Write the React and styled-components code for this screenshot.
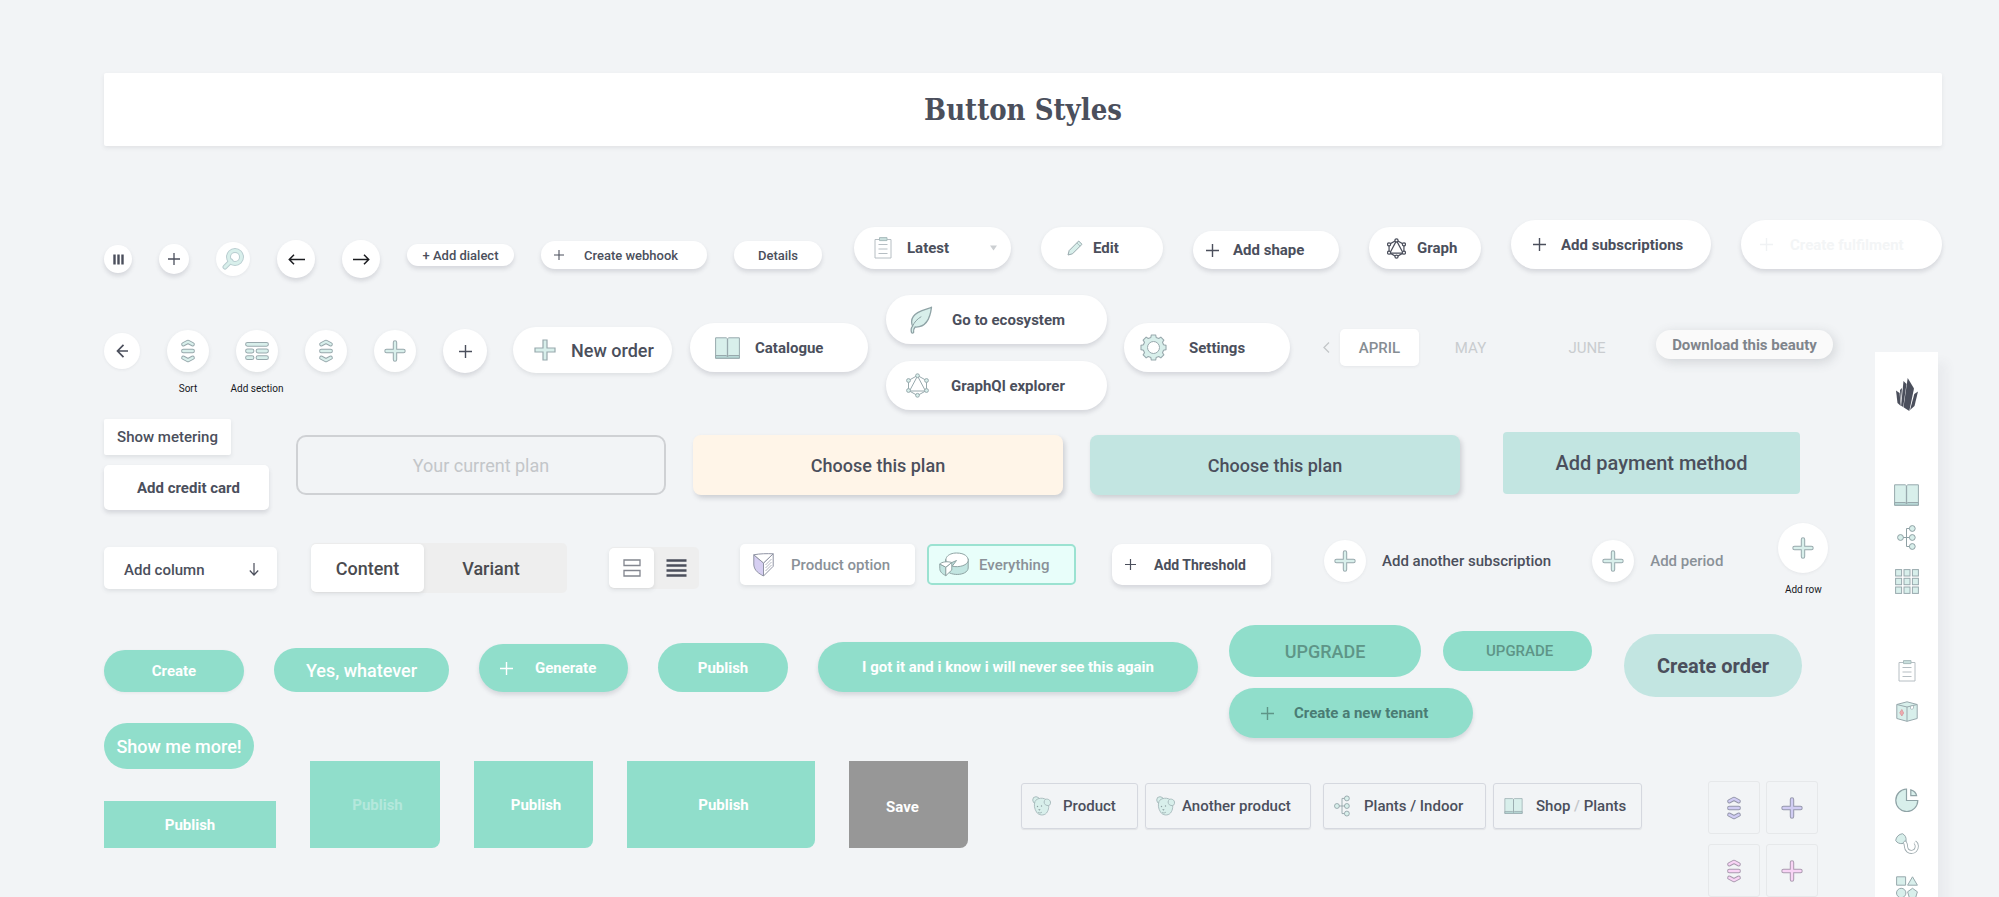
import React, {useState} from 'react';
import styled, {createGlobalStyle, css} from 'styled-components';

const ink = '#4b4f5c';
const line = '#98a9ad';
const mint = '#d8efeb';
const green = '#90decb';
const teal = '#c2e5e1';

const GlobalStyle = createGlobalStyle`
	* {
		box-sizing: border-box;
	}

	html {
		scrollbar-width: none;
	}

	body {
		margin: 0;
		background: #f2f4f6;
		color: ${ink};
		font-family: Roboto, "Liberation Sans", sans-serif;
	}

	button, select {
		font-family: inherit;
		color: inherit;
		border: none;
		padding: 0;
		cursor: pointer;
	}
`;

const Page = styled.main`
	min-height: 100vh;
	padding: 73px 57px 0 104px;
`;

const Banner = styled.header`
	display: flex;
	align-items: center;
	justify-content: center;
	height: 73px;
	background: white;
	border-radius: 2px;
	box-shadow: 0 2px 4px rgba(75, 79, 92, 0.1);
`;

const Title = styled.h1`
	margin: 0;
	font-family: "Roboto Slab", "DejaVu Serif Condensed", "DejaVu Serif", serif;
	font-size: 29px;
	line-height: 36px;
	font-weight: 700;
`;

const TopRow = styled.section`
	display: flex;
	justify-content: space-between;
	align-items: flex-start;
	column-gap: 20px;
	height: 75px;
	margin-top: 74px;
`;

const Board = styled.div`
	display: flex;
	margin-right: 4px;
`;

const Samples = styled.div`
	flex: 1;
	min-width: 0;
`;

const Row = styled.section`
	display: flex;
	align-items: flex-start;
	margin-top: ${p => p.$mt || 0}px;
`;

const Cluster = styled.div`
	display: flex;
	flex-shrink: 0;
	align-items: ${p => p.$align || 'center'};
	gap: ${p => p.$gap || 0}px;
	padding-top: ${p => p.$top || 0}px;
	margin-left: ${p => p.$left || 0}px;
`;

const Stack = styled(Cluster)`
	flex-direction: column;
	align-items: flex-start;
`;

const shadows = {
	none: 'none',
	faint: '0 1px 3px rgba(75, 79, 92, 0.08)',
	soft: '0 2px 4px rgba(75, 79, 92, 0.12)',
	normal: '0 3px 4px rgba(75, 79, 92, 0.17)',
	side: '2px 3px 5px rgba(75, 79, 92, 0.22)',
	wide: '2px 3px 12px rgba(75, 79, 92, 0.2)'
};

const Round = styled.button`
	display: flex;
	flex-shrink: 0;
	align-items: center;
	justify-content: center;
	width: ${p => p.$size || 42}px;
	height: ${p => p.$size || 42}px;
	border-radius: 50%;
	background: white;
	box-shadow: ${p => shadows[p.$shadow || 'soft']};
`;

const Labeled = styled.label`
	display: flex;
	flex-direction: column;
	align-items: center;
	width: ${p => p.$size || 42}px;
`;

const Caption = styled.span`
	margin: 11px 0 -23px;
	font-size: 10px;
	line-height: 12px;
	white-space: nowrap;
	color: #16181d;
`;

const buttonBase = css`
	display: flex;
	flex-shrink: 0;
	align-items: center;
	justify-content: ${p => (p.$pad ? 'flex-start' : 'center')};
	gap: ${p => p.$gap || 0}px;
	width: ${p => p.$w}px;
	height: ${p => p.$h}px;
	padding-left: ${p => p.$pad || 0}px;
	font-size: ${p => p.$fs || 15}px;
	font-weight: ${p => p.$weight || 500};
	white-space: nowrap;
`;

const Pill = styled.button`
	${buttonBase}
	border-radius: 32px;
	background: white;
	font-weight: ${p => p.$weight || 700};
	box-shadow: ${p => shadows[p.$shadow || 'normal']};
`;

const GreenPill = styled(Pill)`
	background: ${green};
	color: ${p => p.$color || 'white'};
`;

const OrderPill = styled(Pill)`
	background: ${teal};
`;

const DownloadPill = styled(Pill)`
	background: #fafafa;
	color: #80858c;
`;

const FadedPill = styled(Pill)`
	color: #f3f5f6;
`;

const SelectPill = styled.label`
	${buttonBase}
	border-radius: 32px;
	background: white;
	box-shadow: ${shadows.normal};
`;

const Select = styled.select`
	appearance: none;
	width: 68px;
	background: transparent;
	font-size: 15px;
	font-weight: 700;
`;

const Card = styled.button`
	${buttonBase}
	border-radius: ${p => p.$r || 5}px;
	background: ${p => p.$bg || 'white'};
	box-shadow: ${p => shadows[p.$shadow || 'soft']};
`;

const OutlineCard = styled(Card)`
	border: 2px solid #cfd1d4;
	background: transparent;
	color: #c3c6c9;
`;

const OptionCard = styled(Card)`
	color: #8a9198;
`;

const ActiveOption = styled(OptionCard)`
	border: 2px solid #9be2d1;
	background: #e8fefa;
`;

const ColumnCard = styled(Card)`
	justify-content: space-between;
	padding: 3px 18px 0 20px;
`;

const Tab = styled.button`
	width: ${p => p.$w}px;
	height: 37px;
	border-radius: 5px;
	font-size: 15px;
	color: ${p => (p.$on ? '#868d93' : '#c9cccf')};
	font-weight: ${p => (p.$on ? 500 : 400)};
	background: ${p => (p.$on ? 'white' : 'transparent')};
	box-shadow: ${p => (p.$on ? shadows.faint : 'none')};
`;

const Ghost = styled.button`
	display: flex;
	align-items: center;
	gap: 16px;
	background: transparent;
	font-size: 15px;
	font-weight: 500;
	color: ${p => p.$color || ink};
`;

const Segment = styled.div`
	display: flex;
	align-items: center;
	width: ${p => p.$w}px;
	height: ${p => p.$h}px;
	padding-right: ${p => p.$end || 0}px;
	border-radius: 5px;
	background: #eeeeee;
`;

const SegmentButton = styled.button`
	display: flex;
	align-items: center;
	justify-content: center;
	flex: ${p => p.$grow || 1};
	height: calc(100% - 2px);
	border-radius: 5px;
	font-size: 18px;
	font-weight: 500;
	color: #4a4b4f;
	background: ${p => (p.$on ? 'white' : 'transparent')};
	box-shadow: ${p => (p.$on ? shadows.soft : 'none')};
`;

const Block = styled.button`
	width: ${p => p.$w}px;
	height: ${p => p.$h || 87}px;
	padding: ${p => p.$pad || 0};
	border-radius: 0 0 ${p => (p.$h ? 0 : 8)}px 0;
	background: ${p => p.$bg || green};
	color: ${p => p.$color || 'white'};
	font-size: 15px;
	font-weight: 700;
`;

const Crumb = styled.button`
	${buttonBase}
	height: 46px;
	border: 1px solid #d5d8df;
	border-radius: 3px;
	background: transparent;
	box-shadow: 0 1px 1px rgba(75, 79, 92, 0.1);
`;

const Slash = styled.span`
	color: #c3c6c9;
`;

const TileGrid = styled.div`
	display: grid;
	grid-template-columns: 52px 52px;
	gap: 10px 6px;
	padding-top: 58px;
	margin-left: 66px;
`;

const Tile = styled.button`
	display: flex;
	align-items: center;
	justify-content: center;
	height: 53px;
	border: 1px solid #e6e8ea;
	border-radius: 3px;
	background: transparent;
`;

const Sidebar = styled.nav`
	flex-shrink: 0;
	width: 63px;
	margin-top: 57px;
	padding-top: 26px;
	background: white;
	box-shadow: 9px 10px 10px rgba(75, 79, 92, 0.05);
`;

const SideGroup = styled.div`
	display: flex;
	flex-direction: column;
	align-items: center;
	gap: 19px;
	margin-bottom: ${p => p.$mb || 66}px;

	&:last-child {
		gap: 21px;
		margin-bottom: 0;
	}
`;

const SideLink = styled.a`
	display: block;
`;

const Svg = styled.svg`
	display: block;
	flex-shrink: 0;
	fill: none;
	stroke: ${line};
`;

const Icon = ({w, h = w, box, children, ...rest}) => (
	<Svg width={w} height={h} viewBox={box || `0 0 ${w} ${h}`} aria-hidden='true' {...rest}>
		{children}
	</Svg>
);

//a thick rounded line with a thin outline round it
const Tube = ({d, size = 4, fill = mint, stroke = line}) => (
	<g strokeLinecap='round' strokeLinejoin='round'>
		<path d={d} stroke={stroke} strokeWidth={size + 1.4}/>
		<path d={d} stroke={fill} strokeWidth={size - 0.6}/>
	</g>
);

const ThinPlus = ({size = 13, color = ink}) => (
	<Icon w={size} box='0 0 13 13'>
		<path d='M6.5 0v13M0 6.5h13' stroke={color} strokeWidth='1.4'/>
	</Icon>
);

const FatPlus = ({fill, stroke}) => (
	<Icon w={22}>
		<Tube d='M11 2.5v17M2.5 11h17' size={3} fill={fill} stroke={stroke}/>
	</Icon>
);

const SquarePlus = () => (
	<Icon w={22}>
		<path
			d='M9 1h4v8h8v4h-8v8H9v-8H1V9h8z'
			fill={mint}
			stroke={line}
			strokeWidth='1.2'
		/>
	</Icon>
);

const SortIcon = ({fill, stroke}) => (
	<Icon w={16} h={24}>
		<Tube d='M3.3 5.300l4.700-2.500 4.700 2.500M3.300 18.700l4.700 2.500 4.700-2.500' size={2.9} fill={fill} stroke={stroke}/>
		<Tube d='M3.300 12h9.400' size={3} fill={fill} stroke={stroke}/>
	</Icon>
);

const SectionIcon = () => (
	<Icon w={26} h={20}>
		<Tube d='M3.500 3.300h19M3.500 10h4.500M14 10h8.500M3.500 16.700h4.500M14 16.700h8.500' size={3.4}/>
	</Icon>
);

const SearchIcon = () => (
	<Icon w={22}>
		<g strokeLinecap='round'>
			<path d='M3 19l6-6' stroke='#b9cdd0' strokeWidth='5'/>
			<circle cx='13' cy='9' r='6.5' stroke='#b9cdd0' strokeWidth='5'/>
			<path d='M3 19l6-6' stroke={mint} strokeWidth='3'/>
			<circle cx='13' cy='9' r='6.5' stroke={mint} strokeWidth='3'/>
		</g>
	</Icon>
);

const BarsIcon = () => (
	<Icon w={11}>
		<path d='M1.500 0.500v10M5.500 0.500v10M9.500 0.500v10' stroke={ink} strokeWidth='2.400'/>
	</Icon>
);

const Arrow = ({flip, color = '#1b1c20'}) => (
	<Icon w={17} h={11}>
		<path
			d={flip ? 'M0 5.500h16M11 0.800l4.700 4.700L11 10.200' : 'M17 5.500H1M6 0.800L1.300 5.500 6 10.200'}
			stroke={color}
			strokeWidth='1.500'
		/>
	</Icon>
);

const BackArrow = () => (
	<Icon w={12} h={14}>
		<path d='M12 7H1.500M7.500 0.800L1.500 7l6 6.200' stroke={ink} strokeWidth='1.700'/>
	</Icon>
);

const DownArrow = () => (
	<Icon w={10} h={13}>
		<path d='M5 0v12M0.800 7.500L5 12l4.200-4.500' stroke={ink} strokeWidth='1.200'/>
	</Icon>
);

const Chevron = () => (
	<Icon w={7} h={11}>
		<path d='M6 0.500L1 5.500l5 5' stroke='#c3c6c9' strokeWidth='1.300'/>
	</Icon>
);

const Caret = () => (
	<Icon w={7} h={6}>
		<path d='M0 0.500h7L3.500 5.500z' fill='#cccfd2' stroke='none'/>
	</Icon>
);

const Clipboard = () => (
	<Icon w={18} h={22}>
		<path d='M1 2.500h16V21H1z' fill='white' stroke='#b6bec3'/>
		<path d='M5.500 0.600h7.500v3H5.500z' fill='#c9dfdd' stroke='#a9bcbd'/>
		<path d='M4.500 7.500h9M4.500 12h9M4.500 16.500h9' stroke='#b6bec3'/>
	</Icon>
);

const Pencil = () => (
	<Icon w={16}>
		<path d='M1 15l1.200-4.500L11.700 1l3.300 3.300-9.500 9.500z' fill={mint}/>
		<path d='M9.800 2.900l3.300 3.300' strokeWidth='0.700'/>
	</Icon>
);

const GraphIcon = ({w = 23, h = 25, fill = mint, stroke = line, bold = 1}) => (
	<Icon w={w} h={h} box='0 0 23 25'>
		<g stroke={stroke} strokeWidth={bold}>
			<path d='M11.500 2.500L20.500 7.500v10l-9 5-9-5v-10z'/>
			<path d='M11.500 3L3.500 18h16z'/>
			<g fill={fill}>
				<circle cx='11.500' cy='2.700' r='1.900'/>
				<circle cx='20.500' cy='7.500' r='1.900'/>
				<circle cx='20.500' cy='17.500' r='1.900'/>
				<circle cx='11.500' cy='22.300' r='1.900'/>
				<circle cx='2.500' cy='17.500' r='1.900'/>
				<circle cx='2.500' cy='7.500' r='1.900'/>
			</g>
		</g>
	</Icon>
);

const Leaf = () => (
	<Icon w={24} h={28}>
		<g stroke='#8fa3a6' strokeLinejoin='round'>
			<path
				d='M22.500 1.200C21.500 2.800 3 4.500 2.600 15.500c0 2 .4 3.600 1 4.600C1.800 22.300 2 25 2.600 26.800c.8.500 1.700.3 2-.3-.3-2 0-3.800 1.500-5.500 8 .5 14.500-3.500 16.400-19.800z'
				fill={mint}
				strokeWidth='1.300'
			/>
			<path d='M3.800 19.800c1.500-3.500 4-6.500 8.500-9.200'/>
		</g>
	</Icon>
);

const Book = ({w = 25, h = 22}) => (
	<Icon w={w} h={h} box='0 0 25 22'>
		<path d='M0.600 0.800h10.600l1.300 1 1.300-1h10.600v20.400H0.600z' fill={mint}/>
		<path d='M0.600 18.500h10.600l1.300 1 1.300-1h10.600v2.700H0.600z' fill='#b7d8d6'/>
		<path d='M12.500 1.800v18' strokeWidth='1.300'/>
	</Icon>
);

const gearPath = (() => {
	const pts = [];
	for (let i = 0; i < 8; i++) {
		const mid = (i * Math.PI) / 4;
		[[-0.26, 10.4], [-0.17, 12.7], [0.17, 12.7], [0.26, 10.4]].forEach(([a, r]) =>
			pts.push(`${13.5 + r * Math.sin(mid + a)} ${13.5 - r * Math.cos(mid + a)}`)
		);
	}
	return `M${pts.join('L')}z`;
})();

const Gear = () => (
	<Icon w={27}>
		<path d={gearPath} fill={mint} strokeWidth='1.100' strokeLinejoin='round'/>
		<circle cx='13.500' cy='13.500' r='6' fill='white'/>
	</Icon>
);

const Wedge = () => (
	<Icon w={21} h={24}>
		<g stroke='#8f93a3' strokeLinejoin='round'>
			<path d='M0.800 1.800L10.500 10v13C6 20.500 1.500 18 0.800 12z' fill='#d6cff2'/>
			<path d='M20.200 0.800v12.500L10.500 23V10z' fill='white'/>
			<path d='M0.800 1.800C7 0.600 14 0.500 20.200 0.800L10.500 10z' fill='white'/>
			<path d='M12.500 12l6-6M12.500 15l6-6M12.500 18l6-6' strokeWidth='0.700'/>
		</g>
	</Icon>
);

const Wheel = () => (
	<Icon w={30} h={25}>
		<g stroke='#8ea3a3' strokeLinejoin='round'>
			<path d='M6.500 7.500v9c2 8 22 8 22.700-.5v-9z' fill={teal}/>
			<path
				d='M17.500 8.500L9.500 12C3.500 7 9 1 17.500 1s11.700 4 11.700 7.200c0 5-9 7.600-16 6z'
				fill='white'
			/>
			<path d='M0.800 12l6 3.200v8.500C3.500 22 0.800 20 0.800 16.500z' fill={teal}/>
			<path d='M6.800 15.200l6-4.700v7.500l-6 5.700z' fill='white'/>
			<path d='M0.800 12c2-2 7-3 12-1.500l-6 4.700z' fill='white'/>
		</g>
	</Icon>
);

const Teddy = () => (
	<Icon w={19} h={20}>
		<g fill={mint} stroke='#a5b8ba' strokeWidth='0.900'>
			<circle cx='4' cy='4' r='3.300'/>
			<path d='M3 5.500C4.500 2 12 0.500 15.500 5c2 4 1.500 9-1 12-2.500 3-8 2.500-10-1C2.300 12.500 1.800 9 3 5.500z'/>
			<path d='M12.500 4.500c1-2.500 5.500-1.500 6 1.500.3 2.500-1 4-3.500 3.500-2.500-.5-3.500-3-2.500-5z'/>
		</g>
		<g fill='#8ea0a3' stroke='none'>
			<circle cx='5.500' cy='10.500' r='0.700'/>
			<circle cx='9.500' cy='10' r='0.700'/>
			<path d='M6 13.500l2.500-.5-.8 1.800z'/>
		</g>
		<path d='M6 16.500c1.500.8 3 .5 4-.5' stroke='#8ea0a3' strokeWidth='0.700'/>
	</Icon>
);

const Tree = ({w = 19, h = 25}) => (
	<Icon w={w} h={h} box='0 0 19 25'>
		<path d='M6 12.500h7M13 3.500H9.500v18H13' stroke='#8fa0a4'/>
		<g fill={mint} stroke='#8fa0a4'>
			<circle cx='3.500' cy='12.500' r='2.900'/>
			<circle cx='15.300' cy='3.500' r='2.900'/>
			<circle cx='15.300' cy='12.500' r='2.900'/>
			<circle cx='15.300' cy='21.500' r='2.900'/>
		</g>
	</Icon>
);

const NineGrid = () => (
	<Icon w={24} h={25}>
		{[0, 1, 2].map(r =>
			[0, 1, 2].map(c => (
				<rect
					key={`${r}${c}`}
					x={0.6 + c * 8.4}
					y={0.6 + r * 8.7}
					width='6'
					height='6.400'
					fill={mint}
				/>
			))
		)}
	</Icon>
);

const Parcel = () => (
	<Icon w={22} h={21}>
		<g strokeLinejoin='round'>
			<path d='M0.800 3.500L11 0.800l10.200 2.700v14L11 20.300l-10.200-2.800z' fill={mint}/>
			<path d='M0.800 3.500L11 6l10.200-2.500M11 6v14.300'/>
			<path d='M14.500 5.200v2.500c1 1 2.500.5 3-.5V4.400z' fill='white' strokeWidth='0.700'/>
			<path d='M5.800 8.500l1.800 3.500-1.800 3-2-3.200z' fill='#f1a9ae' stroke='#d9a0a4'/>
		</g>
	</Icon>
);

const PieIcon = () => (
	<Icon w={24}>
		<g stroke='#8fa3a6' strokeWidth='1.200'>
			<path d='M11.500 1v11.500h11.300A11 11.300 0 1 1 11.500 1z' fill={mint}/>
			<path d='M15.800 1.800v5.800h5.800c-.6-3-2.800-5-5.800-5.800z' fill={mint}/>
		</g>
	</Icon>
);

const Shovel = () => (
	<Icon w={24} h={22}>
		<path
			d='M8 7.500c2.500 1 2.800 3 3 6 .5 7.500 11 7 10.800-.5-.1-1.800-.8-3-2-3.800'
			stroke='#9aa7ab'
			strokeWidth='4'
		/>
		<path
			d='M8 7.500c2.500 1 2.800 3 3 6 .5 7.500 11 7 10.800-.5-.1-1.800-.8-3-2-3.800'
			stroke='white'
			strokeWidth='2.400'
		/>
		<path d='M0.700 7.500C1 4 4 1 7.500 0.700c2.800 1.500 4 4 3.500 7.300-2 0-2.500.8-3 2.500-3 .5-6-.5-7.300-3z' fill={mint}/>
	</Icon>
);

const Shapes = () => (
	<Icon w={22} h={23}>
		<g fill={mint}>
			<path d='M0.600 0.800h9v8.400h-9z'/>
			<path d='M16.500 0.800l4.900 8.400h-9.800z'/>
			<circle cx='5.200' cy='17' r='4.700'/>
			<path d='M16.500 12.300l4.900 3.500-1.800 6h-6.200l-1.800-6z'/>
		</g>
	</Icon>
);

const Logo = () => (
	<Icon w={22} h={33}>
		<g fill={ink} stroke='none'>
			<path d='M0 12.500l3.600 2.500 1.200 13L1.500 25z'/>
			<path d='M7.500 3l3 3-3.300 23-2.100-1.200z'/>
			<path d='M4 12l2-2-1.200 14z'/>
			<path d='M11.700 0L18 10.500 13.300 33 7.500 29.300z'/>
			<path d='M22 13.500l-3.700 2.500L14 32l4.500-4z'/>
		</g>
	</Icon>
);

const StackedRows = () => (
	<Icon w={18} h={18}>
		<path d='M1 1h16v5.500H1zM1 11.500h16V17H1z' stroke='#83868f' strokeWidth='1.300'/>
	</Icon>
);

const DenseRows = () => (
	<Icon w={21} h={18}>
		<path d='M0.500 1.500h20M0.500 6.500h20M0.500 11.500h20M0.500 16.500h20' stroke={ink} strokeWidth='2.400'/>
	</Icon>
);

const months = [
	{name: 'APRIL', width: 79},
	{name: 'MAY', width: 103},
	{name: 'JUNE', width: 130}
];

const MonthTabs = () => {
	const [month, setMonth] = useState('APRIL');
	return (
		<Cluster $top={34} $left={33}>
			<Ghost aria-label='Previous month'><Chevron/></Ghost>
			<Cluster $left={10}>
				{months.map(m => (
					<Tab
						key={m.name}
						$w={m.width}
						$on={m.name === month}
						onClick={() => setMonth(m.name)}
					>
						{m.name}
					</Tab>
				))}
			</Cluster>
		</Cluster>
	);
};

const ContentSwitch = () => {
	const [tab, setTab] = useState('Content');
	return (
		<Segment $w={256} $h={50} $end={9}>
			<SegmentButton $grow={113} $on={tab === 'Content'} onClick={() => setTab('Content')}>
				Content
			</SegmentButton>
			<SegmentButton $grow={134} $on={tab === 'Variant'} onClick={() => setTab('Variant')}>
				Variant
			</SegmentButton>
		</Segment>
	);
};

const DensitySwitch = () => {
	const [dense, setDense] = useState(false);
	return (
		<Segment $w={90} $h={42}>
			<SegmentButton $grow={1} $on={!dense} onClick={() => setDense(false)} aria-label='Cards'>
				<StackedRows/>
			</SegmentButton>
			<SegmentButton $grow={1} $on={dense} onClick={() => setDense(true)} aria-label='Lines'>
				<DenseRows/>
			</SegmentButton>
		</Segment>
	);
};

const TopButtons = () => (
	<TopRow>
		<Cluster $gap={27} $align='flex-start'>
			<Cluster $gap={27} $top={20}>
				<Round $size={28} $shadow='normal' aria-label='Columns'><BarsIcon/></Round>
				<Round $size={30} $shadow='normal' aria-label='Add'><ThinPlus size={12}/></Round>
				<Round $size={34} $shadow='faint' aria-label='Search'><SearchIcon/></Round>
				<Round $size={38} $shadow='normal' aria-label='Previous'><Arrow/></Round>
				<Round $size={38} $shadow='normal' aria-label='Next'><Arrow flip/></Round>
			</Cluster>
			<Cluster $gap={27} $top={21}>
				<Pill $w={107} $h={22} $fs={13} $weight={500}>+ Add dialect</Pill>
				<Pill $w={166} $h={28} $fs={13} $weight={500} $pad={13} $gap={20}>
					<ThinPlus size={10}/>Create webhook
				</Pill>
				<Pill $w={88} $h={28} $fs={13} $weight={500}>Details</Pill>
			</Cluster>
		</Cluster>
		<Cluster $gap={30} $align='flex-end'>
			<SelectPill $w={157} $h={42} $pad={20} $gap={15}>
				<Clipboard/>
				<Select aria-label='Order'>
					<option>Latest</option>
				</Select>
				<Caret/>
			</SelectPill>
			<Pill $w={122} $h={42} $pad={26} $gap={10} $shadow='soft'><Pencil/>Edit</Pill>
			<Pill $w={146} $h={38} $pad={13} $gap={14}><ThinPlus/>Add shape</Pill>
			<Pill $w={112} $h={42} $pad={18} $gap={11}>
				<GraphIcon w={19} h={21} fill='white' stroke={ink} bold={1.5}/>Graph
			</Pill>
			<Pill $w={200} $h={49} $pad={22} $gap={15}><ThinPlus/>Add subscriptions</Pill>
			<FadedPill $w={201} $h={49} $pad={19} $gap={17}>
				<ThinPlus color='#f0f2f4'/>Create fulfilment
			</FadedPill>
		</Cluster>
	</TopRow>
);

const NavigationButtons = () => (
	<Row>
		<Cluster $gap={27} $top={34}>
			<Round $size={36} $shadow='faint' aria-label='Back'><BackArrow/></Round>
			<Labeled>
				<Round><SortIcon/></Round>
				<Caption>Sort</Caption>
			</Labeled>
			<Labeled>
				<Round><SectionIcon/></Round>
				<Caption>Add section</Caption>
			</Labeled>
			<Round aria-label='Reorder'><SortIcon/></Round>
			<Round aria-label='Add'><FatPlus/></Round>
			<Round $size={44} $shadow='normal' aria-label='Add'><ThinPlus/></Round>
		</Cluster>
		<Cluster $left={26} $top={32}>
			<Pill $w={159} $h={46} $fs={18} $weight={500} $pad={21} $gap={15} $shadow='soft'>
				<SquarePlus/>New order
			</Pill>
		</Cluster>
		<Cluster $left={18} $top={28}>
			<Pill $w={178} $h={49} $pad={25} $gap={15}><Book/>Catalogue</Pill>
		</Cluster>
		<Stack $gap={17} $left={18}>
			<Pill $w={221} $h={49} $pad={23} $gap={19}><Leaf/>Go to ecosystem</Pill>
			<Pill $w={221} $h={49} $pad={20} $gap={22}><GraphIcon/>GraphQl explorer</Pill>
		</Stack>
		<Cluster $left={17} $top={28}>
			<Pill $w={166} $h={49} $pad={16} $gap={22}><Gear/>Settings</Pill>
		</Cluster>
		<MonthTabs/>
		<Cluster $left={4} $top={35}>
			<DownloadPill $w={177} $h={29} $shadow='wide'>Download this beauty</DownloadPill>
		</Cluster>
	</Row>
);

const PlanButtons = () => (
	<Row $mt={9}>
		<Stack $gap={10}>
			<Card $w={127} $h={36} $r={2}>Show metering</Card>
			<Card $w={165} $h={45} $pad={33} $weight={700} $shadow='normal'>Add credit card</Card>
		</Stack>
		<Cluster $gap={27} $left={27} $top={16}>
			<OutlineCard $w={370} $h={60} $r={10} $fs={18} $weight={400} $shadow='none'>
				Your current plan
			</OutlineCard>
			<Card $w={370} $h={60} $r={8} $fs={18} $bg='#fff5e8' $shadow='side'>Choose this plan</Card>
			<Card $w={370} $h={60} $r={8} $fs={18} $bg={teal} $shadow='side'>Choose this plan</Card>
		</Cluster>
		<Cluster $left={43} $top={13}>
			<Card $w={297} $h={62} $r={4} $fs={20} $bg={teal} $shadow='none'>Add payment method</Card>
		</Cluster>
	</Row>
);

const EditorButtons = () => (
	<Row $mt={13}>
		<Cluster $top={20} $gap={42}>
			<Cluster $gap={34}>
				<ColumnCard $w={173} $h={42}>Add column<DownArrow/></ColumnCard>
				<ContentSwitch/>
			</Cluster>
			<DensitySwitch/>
		</Cluster>
		<Cluster $gap={12} $left={41} $top={21}>
			<OptionCard $w={175} $h={41} $pad={13} $gap={17}>
				<Wedge/>Product option
			</OptionCard>
			<ActiveOption $w={149} $h={41} $pad={10} $gap={10} $shadow='none'>
				<Wheel/>Everything
			</ActiveOption>
		</Cluster>
		<Cluster $left={36} $top={21}>
			<Card $w={159} $h={41} $r={10} $fs={14} $pad={13} $gap={18} $weight={700} $shadow='normal'>
				<ThinPlus size={11}/>Add Threshold
			</Card>
		</Cluster>
		<Cluster $gap={41} $left={53} $top={17}>
			<Ghost>
				<Round as='span' $shadow='faint'><FatPlus/></Round>
				Add another subscription
			</Ghost>
			<Ghost $color='#8a9198'>
				<Round as='span'><FatPlus/></Round>
				Add period
			</Ghost>
		</Cluster>
		<Cluster $left={55}>
			<Labeled $size={50}>
				<Round $size={50} $shadow='faint'><FatPlus/></Round>
				<Caption>Add row</Caption>
			</Labeled>
		</Cluster>
	</Row>
);

const ActionButtons = () => (
	<Row $mt={32}>
		<Cluster $gap={30} $top={17} $align='flex-end'>
			<GreenPill $w={140} $h={42} $shadow='faint'>Create</GreenPill>
			<GreenPill $w={175} $h={44} $fs={18} $weight={500} $shadow='none'>Yes, whatever</GreenPill>
			<GreenPill $w={149} $h={48} $pad={21} $gap={22}>
				<ThinPlus color='white'/>Generate
			</GreenPill>
			<GreenPill $w={130} $h={49} $shadow='none'>Publish</GreenPill>
			<GreenPill $w={380} $h={50}>I got it and i know i will never see this again</GreenPill>
		</Cluster>
		<Stack $gap={11} $left={31}>
			<Cluster $gap={22}>
				<GreenPill $w={192} $h={52} $fs={18} $weight={500} $color='#5e9587' $shadow='none'>
					UPGRADE
				</GreenPill>
				<GreenPill $w={149} $h={40} $weight={500} $pad={43} $color='#5e9587' $shadow='none'>
					UPGRADE
				</GreenPill>
			</Cluster>
			<GreenPill $w={244} $h={50} $pad={32} $gap={20} $color='#4a7c74'>
				<ThinPlus color='#5e9587'/>Create a new tenant
			</GreenPill>
		</Stack>
		<Cluster $left={32} $top={9}>
			<OrderPill $w={178} $h={63} $fs={20} $shadow='none'>Create order</OrderPill>
		</Cluster>
	</Row>
);

const BlockButtons = () => (
	<Row $mt={-15}>
		<Stack $gap={32}>
			<GreenPill $w={150} $h={46} $fs={18} $weight={500} $shadow='none'>Show me more!</GreenPill>
			<Block $w={172} $h={47}>Publish</Block>
		</Stack>
		<Cluster $gap={34} $left={34} $top={38}>
			<Block $w={130} $pad='0 0 0 5px' $color='#b4e8dc'>Publish</Block>
			<Block $w={119} $pad='0 0 0 5px'>Publish</Block>
			<Block $w={188} $pad='0 0 0 5px'>Publish</Block>
			<Block $w={119} $pad='4px 12px 0 0' $bg='#979797'>Save</Block>
		</Cluster>
		<Cluster $gap={12} $left={53} $top={60}>
			<Cluster $gap={7}>
				<Crumb $w={117} $pad={10} $gap={12}><Teddy/>Product</Crumb>
				<Crumb $w={166} $pad={10} $gap={7}><Teddy/>Another product</Crumb>
			</Cluster>
			<Cluster $gap={7}>
				<Crumb $w={163} $pad={10} $gap={14}><Tree w={16} h={22}/>Plants / Indoor</Crumb>
				<Crumb $w={149} $pad={10} $gap={13}>
					<Book w={19} h={16}/>
					<span>Shop <Slash>/</Slash> Plants</span>
				</Crumb>
			</Cluster>
		</Cluster>
		<TileGrid>
			<Tile aria-label='Sort'><SortIcon fill='#d0ccf3' stroke='#9698ac'/></Tile>
			<Tile aria-label='Add'><FatPlus fill='#d0ccf3' stroke='#9698ac'/></Tile>
			<Tile aria-label='Sort'><SortIcon fill='#f8d3f5' stroke='#ab9bb0'/></Tile>
			<Tile aria-label='Add'><FatPlus fill='#f8d3f5' stroke='#ab9bb0'/></Tile>
		</TileGrid>
	</Row>
);

const sideLinks = [
	[['Catalogue', Book], ['Topics', Tree], ['Grids', NineGrid]],
	[['Orders', Clipboard], ['Fulfilment', Parcel]],
	[['Reports', PieIcon], ['Tools', Shovel], ['Shapes', Shapes]]
];

const SideMenu = () => (
	<Sidebar aria-label='Main'>
		<SideGroup $mb={73}>
			<SideLink href='#home' aria-label='Home'><Logo/></SideLink>
		</SideGroup>
		{sideLinks.map((group, i) => (
			<SideGroup key={i}>
				{group.map(([name, Glyph]) => (
					<SideLink key={name} href={`#${name.toLowerCase()}`} aria-label={name}>
						<Glyph/>
					</SideLink>
				))}
			</SideGroup>
		))}
	</Sidebar>
);

const App = () => (
	<>
		<GlobalStyle/>
		<Page>
			<Banner>
				<Title>Button Styles</Title>
			</Banner>
			<TopButtons/>
			<Board>
				<Samples>
					<NavigationButtons/>
					<PlanButtons/>
					<EditorButtons/>
					<ActionButtons/>
					<BlockButtons/>
				</Samples>
				<SideMenu/>
			</Board>
		</Page>
	</>
);

export default App;
